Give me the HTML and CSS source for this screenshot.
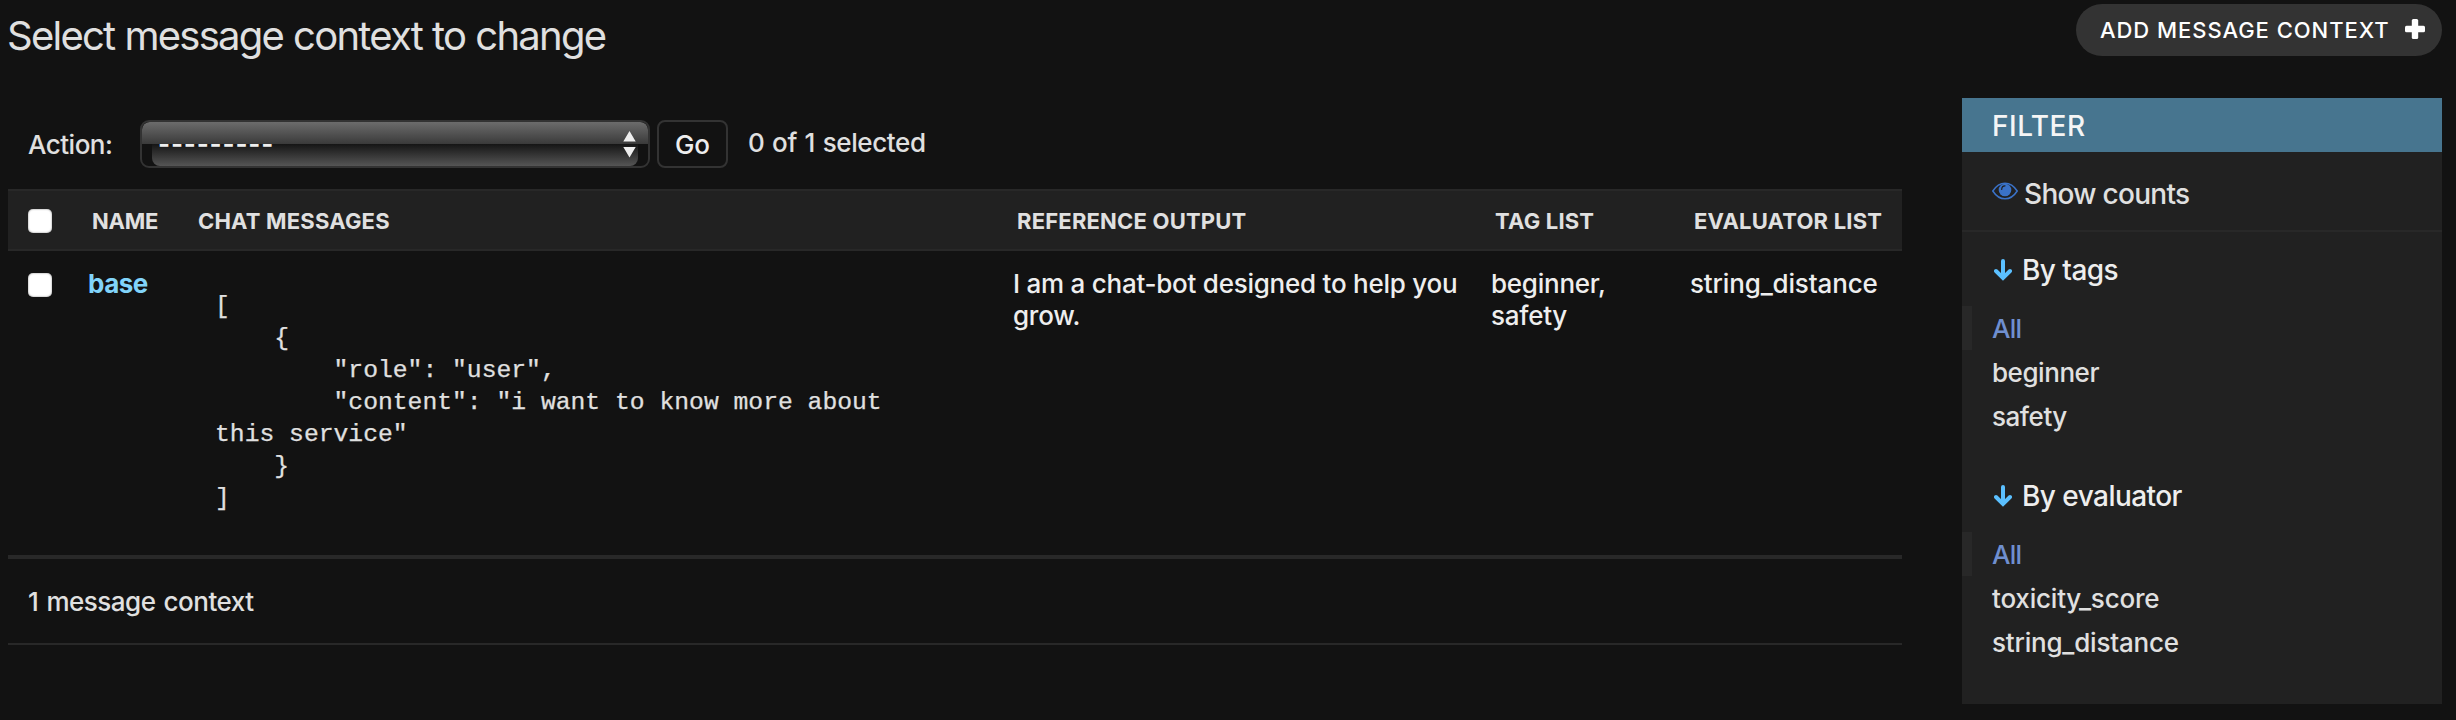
FILE: index.html
```html
<!DOCTYPE html>
<html lang="en">
<head>
<meta charset="utf-8">
<title>Select message context to change</title>
<link rel="stylesheet" href="styles.css">
</head>
<body>
<header class="top">
  <h1 class="title"><span>Select message context to change</span></h1>
  <a class="add"><span>Add message context</span>
    <svg width="20" height="20" viewBox="0 0 20 20"><rect x="6.800" y="0" width="6.400" height="20" rx="1.500" fill="#fff"/><rect x="0" y="6.800" width="20" height="6.400" rx="1.500" fill="#fff"/></svg>
  </a>
</header>
<main class="content">
  <section class="list">
    <div class="actions">
      <label class="label"><span>Action:</span></label>
      <div class="select">
        <div class="select-top"></div>
        <div class="select-bottom"></div>
        <span class="dashes">---------</span>
        <svg class="arrows" width="13" height="27" viewBox="0 0 13 27"><path d="M6.500 0 12.700 10.500H.3zM.3 16h12.400L6.500 26.500z" fill="#eee"/></svg>
      </div>
      <button class="go"><span>Go</span></button>
      <span class="counter">0 of 1 selected</span>
    </div>
    <div class="row head">
      <div><i class="check"></i></div>
      <div><span>Name</span></div>
      <div><span>Chat messages</span></div>
      <div><span>Reference output</span></div>
      <div><span>Tag list</span></div>
      <div><span>Evaluator list</span></div>
    </div>
    <div class="row body">
      <div><i class="check"></i></div>
      <div><a class="name">base</a></div>
      <div><pre class="json"><span>[
    {
        "role": "user",
        "content": "i want to know more about
this service"
    }
]</span></pre></div>
      <div><span>I am a chat-bot designed to help you<br>grow.</span></div>
      <div><span>beginner,<br>safety</span></div>
      <div><span>string_distance</span></div>
    </div>
    <p class="paginator"><span>1 message context</span></p>
  </section>
  <aside class="filter">
    <h2 class="filter-title"><span>Filter</span></h2>
    <div class="counts">
      <svg width="26" height="18" viewBox="0 0 26 18"><path d="M.8 9C4 4 8.500 1.200 13 1.200S22 4 25.200 9C22 14 17.500 16.800 13 16.800S4 14 .8 9z" fill="none" stroke="#3a72c8" stroke-width="1.500"/><circle cx="13" cy="8" r="6.300" fill="#3a72c8"/><path d="M9.700 7.400C9.700 5.300 11 4 13 3.900" fill="none" stroke="#212121" stroke-width="1.200" stroke-linecap="round"/></svg>
      <span>Show counts</span>
    </div>
    <h3 class="by"><svg width="18" height="22" viewBox="0 0 18 22"><path d="M9 2v16M2 12l7 7 7-7" fill="none" stroke="#5bc0ff" stroke-width="4" stroke-linecap="round"/></svg><span>By tags</span></h3>
    <ul class="opts">
      <li class="on"><span>All</span></li><li><span class="tight">beginner</span></li><li><span class="tight">safety</span></li>
    </ul>
    <h3 class="by"><svg width="18" height="22" viewBox="0 0 18 22"><path d="M9 2v16M2 12l7 7 7-7" fill="none" stroke="#5bc0ff" stroke-width="4" stroke-linecap="round"/></svg><span>By evaluator</span></h3>
    <ul class="opts">
      <li class="on"><span>All</span></li><li><span>toxicity_score</span></li><li><span>string_distance</span></li>
    </ul>
  </aside>
</main>
</body>
</html>
```
FILE: styles.css
```css
* { box-sizing: border-box; margin: 0; padding: 0; }
body { width: 2456px; height: 720px; overflow: hidden; background: #121212; color: #eee; font: 450 26px/32px Inter, "Liberation Sans", sans-serif; }
.top { display: flex; justify-content: space-between; align-items: flex-start; height: 98px; padding: 4px 14px 0 7px; }
.title { font-size: 40px; font-weight: 400; line-height: 63px; letter-spacing: -1.75px; word-spacing: 0.5px; color: #e0e0e0; }
.add { display: flex; align-items: center; justify-content: space-between; width: 366px; height: 52px; padding: 0 17px 0 24px; border-radius: 26px; background: #333; color: #fff; font-size: 22px; font-weight: 500; text-transform: uppercase; letter-spacing: 0.95px; }
.add svg { margin-top: -2px; }
.content { display: flex; gap: 60px; padding-left: 8px; align-items: flex-start; }
.list { width: 1894px; }
.actions { display: flex; height: 91px; padding: 22px 0 0 20px; color: #e0e0e0; }
.label { width: 112px; line-height: 49px; letter-spacing: -0.5px; }
.select { position: relative; width: 510px; height: 48px; border: 2px solid #333; border-radius: 9px; overflow: hidden; }
.select-top { height: 22px; border-radius: 8px 8px 0 0; background: linear-gradient(#6c6c6c, #3a3a3a); }
.select-bottom { height: 22px; margin: 0 10px; border-radius: 0 0 8px 8px; background: linear-gradient(#151515, #555); }
.dashes { position: absolute; left: 16px; top: 6px; font-weight: 600; letter-spacing: 0.8px; color: #eee; }
.arrows { position: absolute; right: 12px; top: 9px; }
.go { width: 71px; height: 48px; margin-left: 7px; border: 2px solid #333; border-radius: 8px; background: #121212; color: #eee; font: 450 26px/43px Inter, sans-serif; }
.counter { margin-left: 20px; line-height: 45px; letter-spacing: -0.4px; word-spacing: 1.2px; }
.row { display: grid; grid-template-columns: 80px 106px 819px 478px 199px 212px; }
.head { height: 62px; border-top: 2px solid #282828; border-bottom: 2px solid #282828; background: #212121; color: #e0e0e0; font-size: 22px; font-weight: 650; line-height: 60px; text-transform: uppercase; letter-spacing: 0.2px; }
.head > div:not(:first-child) { padding-left: 4px; }
.head > div:nth-child(2) { letter-spacing: -0.2px; }
.check { display: block; width: 24px; height: 24px; margin: 18px 0 0 20px; border-radius: 5px; background: #fff; box-shadow: inset 0 0 2px #777; }
.body { height: 308px; padding-top: 17px; border-bottom: 4px solid #282828; letter-spacing: -0.25px; }
.body > div:last-child { letter-spacing: -0.15px; }
.body .check { margin-top: 5px; }
.name { color: #81d4fa; font-weight: 700; letter-spacing: -0.5px; }
.json { margin-top: 22px; padding-left: 21px; color: #e0e0e0; font: 24.7px/32px "Liberation Mono", monospace; letter-spacing: 0; -webkit-text-stroke: 0.25px #e0e0e0; }
.paginator { height: 86px; padding-left: 20px; border-bottom: 2px solid #282828; line-height: 85px; letter-spacing: -0.5px; word-spacing: 1.7px; color: #e0e0e0; }
.filter { width: 480px; height: 606px; background: #212121; color: #e0e0e0; }
.filter-title { height: 54px; padding-left: 30px; background: #47758f; color: #f5f5f5; font-size: 28px; font-weight: 450; line-height: 57px; letter-spacing: 0.5px; text-transform: uppercase; }
.counts { display: flex; align-items: center; height: 80px; padding: 0 0 0 30px; gap: 6px; border-bottom: 2px solid #282828; font-size: 28px; letter-spacing: -0.7px; }
.counts span { padding-top: 6px; }
.by { display: flex; align-items: center; height: 74px; padding: 2px 0 0 32px; gap: 10px; color: #eee; font-size: 28px; font-weight: 450; letter-spacing: -0.55px; }
.opts { list-style: none; height: 152px; }
.opts li { height: 44px; padding-left: 30px; line-height: 45px; letter-spacing: -0.2px; }
.opts .tight { letter-spacing: -0.45px; }
.opts .on { border-left: 10px solid #282828; padding-left: 20px; color: #6f8fcf; letter-spacing: -0.8px; }
```
